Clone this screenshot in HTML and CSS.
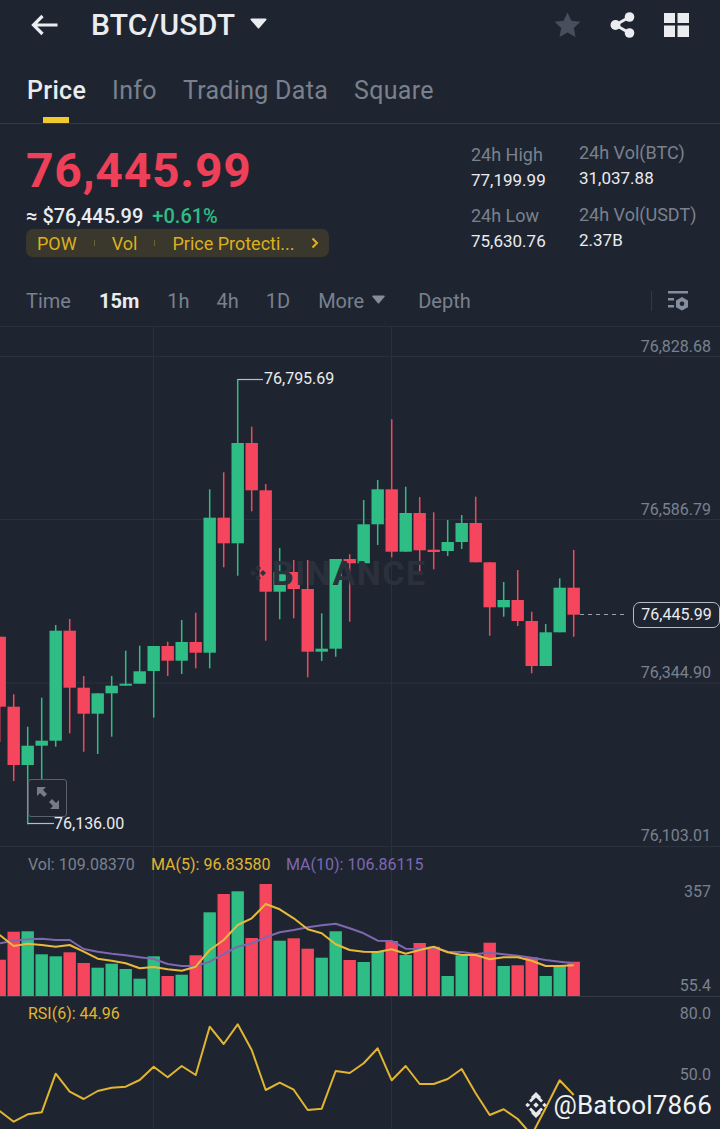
FILE: index.html
```html
<!DOCTYPE html>
<html lang="en">

<head>
  <meta charset="UTF-8">
  <meta name="viewport" content="width=device-width, initial-scale=1.0">
  <title>BTC/USDT</title>
  <link rel="stylesheet" href="styles.css">
</head>

<body>
  <div class="page">
    <!-- Top bar -->
    <header class="topbar">
      <svg class="back-icon" width="28" height="22" viewBox="0 0 28 22">
        <path d="M26.5 11H3M11.5 2L2.5 11l9 9" fill="none" stroke="#eaecef" stroke-width="3.2" />
      </svg>
      <h1 class="pair">BTC/USDT</h1>
      <svg class="pair-caret" width="17" height="11" viewBox="0 0 17 11">
        <path d="M1.5 0.5h14a1 1 0 0 1 .8 1.6L9.3 10a1 1 0 0 1-1.6 0L.7 2.100a1 1 0 0 1 .8-1.600z" fill="#eaecef" />
      </svg>
      <div class="topbar-actions">
        <svg width="27" height="26" viewBox="0 0 27 26">
          <path d="M13.500 0.500l3.900 8.200 9 1.100-6.600 6.200 1.700 8.900-8-4.400-8 4.400 1.700-8.900L.6 9.800l9-1.100z" fill="#474f5c" />
        </svg>
        <svg width="25" height="26" viewBox="0 0 25 26">
          <path d="M19.500 5L5.500 13l14 8" fill="none" stroke="#eaecef" stroke-width="3" />
          <circle cx="19.500" cy="5" r="4.800" fill="#eaecef" />
          <circle cx="5.500" cy="13" r="5" fill="#eaecef" />
          <circle cx="19.500" cy="21" r="4.800" fill="#eaecef" />
        </svg>
        <svg width="25" height="24" viewBox="0 0 25 24">
          <path d="M0 0h11v10H0zM13.500 0H25v10H13.500zM0 12.500h11V24H0zM13.500 12.500H25V24H13.500z" fill="#eaecef" />
        </svg>
      </div>
    </header>

    <!-- Tabs -->
    <nav class="tabs">
      <a href="#" class="tab tab-active">Price</a>
      <a href="#" class="tab">Info</a>
      <a href="#" class="tab">Trading Data</a>
      <a href="#" class="tab">Square</a>
    </nav>

    <!-- Price summary -->
    <section class="summary">
      <div class="summary-main">
        <div class="last-price">76,445.99</div>
        <div class="fiat-row">
          <span class="fiat">≈ $76,445.99</span>
          <span class="change">+0.61%</span>
        </div>
        <div class="tags">
          <span>POW</span>
          <i class="tag-sep"></i>
          <span>Vol</span>
          <i class="tag-sep"></i>
          <span>Price Protecti...</span>
          <svg class="tag-arrow" width="8" height="12" viewBox="0 0 8 12">
            <path d="M1.500 1.500L6 6l-4.500 4.500" fill="none" stroke="#e0b31f" stroke-width="2" />
          </svg>
        </div>
      </div>
      <div class="stat-col stat-col-a">
        <div class="stat">
          <span class="stat-label">24h High</span>
          <span class="stat-value">77,199.99</span>
        </div>
        <div class="stat">
          <span class="stat-label">24h Low</span>
          <span class="stat-value">75,630.76</span>
        </div>
      </div>
      <div class="stat-col stat-col-b">
        <div class="stat">
          <span class="stat-label">24h Vol(BTC)</span>
          <span class="stat-value">31,037.88</span>
        </div>
        <div class="stat">
          <span class="stat-label">24h Vol(USDT)</span>
          <span class="stat-value">2.37B</span>
        </div>
      </div>
    </section>

    <!-- Interval row -->
    <div class="intervals">
      <span class="iv iv-time">Time</span>
      <span class="iv iv-15m">15m</span>
      <span class="iv iv-1h">1h</span>
      <span class="iv iv-4h">4h</span>
      <span class="iv iv-1d">1D</span>
      <span class="iv iv-more">More</span>
      <svg class="more-caret" width="13" height="9" viewBox="0 0 13 9">
        <path d="M1 0.500h11a.8.8 0 0 1 .6 1.300L7.100 8.200a.8.8 0 0 1-1.200 0L.4 1.800A.8.8 0 0 1 1 .5z" fill="#848e9c" />
      </svg>
      <span class="iv iv-depth">Depth</span>
      <i class="iv-sep"></i>
      <svg class="iv-settings" width="22" height="22" viewBox="0 0 22 22">
        <path d="M1 1h20v2.500H1zM1 8h6v2.500H1zM1 15h6v2.500H1z" fill="#848e9c" />
        <path d="M15 7l6 3.400v6.800L15 20.600l-6-3.400v-6.800z" fill="#848e9c" />
        <circle cx="15" cy="13.800" r="2.300" fill="#1f2530" />
      </svg>
    </div>

    <!-- Chart, drawn by chart.js -->
    <main class="chart" id="chart">
      <div class="watermark">
        <svg width="16" height="16" viewBox="0 0 16 16">
          <path d="M8 0l3 3-3 3-3-3zM3 5l3 3-3 3-3-3zM13 5l3 3-3 3-3-3zM8 10l3 3-3 3-3-3z" fill="#2b313c" />
        </svg>
        <span>BINANCE</span>
      </div>
      <div class="expand-btn">
        <svg width="24" height="24" viewBox="0 0 24 24">
          <path d="M1 1h9L7 4l4 4-3 3-4-4-3 3zM23 23h-9l3-3-4-4 3-3 4 4 3-3z" fill="#757c89" />
        </svg>
      </div>
      <div class="price-tag">76,445.99</div>
      <div class="credit">
        <svg width="28" height="28" viewBox="0 0 28 28">
          <path d="M14 1l5 5-2.200 2.200L14 5.400l-2.800 2.800L9 6zM5.500 11.800L8.200 14l-2.700 2.200L3.300 14zM22.500 11.800l2.200 2.200-2.200 2.200L20.300 14zM14 11.200l2.800 2.800-2.800 2.800-2.800-2.800zM9 22l2.200-2.200 2.800 2.800 2.800-2.800L19 22l-5 5z" fill="#e6e8eb" />
          <path d="M7 9.500l7-7 7 7-2 2-5-5-5 5zM7 18.500l2-2 5 5 5-5 2 2-7 7z" fill="#e6e8eb" />
        </svg>
        <span>@Batool7866</span>
      </div>
    </main>
  </div>

  <script src="chart.js"></script>
</body>

</html>
```

FILE: styles.css
```css
/* Basic Reset */
* {
  margin: 0;
  padding: 0;
  box-sizing: border-box;
}

body {
  font-family: 'Roboto', 'Liberation Sans', sans-serif;
  background-color: #1f2530;
  color: #eaecef;
}

.page {
  width: 720px;
  height: 1129px;
  overflow: hidden;
  display: flex;
  flex-direction: column;
}

/* Top bar */
.topbar {
  height: 50px;
  display: flex;
  align-items: center;
  padding-left: 31px;
  flex-shrink: 0;
}

.back-icon {
  margin-right: 32px;
}

.pair {
  font-size: 30px;
  font-weight: 500;
  letter-spacing: 0.2px;
  line-height: 50px;
}

.pair-caret {
  margin: -3px 0 0 15px;
}

.topbar-actions {
  margin-left: auto;
  padding-right: 31px;
  display: flex;
  align-items: center;
  gap: 29px;
}

/* Tabs */
.tabs {
  height: 74px;
  flex-shrink: 0;
  display: flex;
  gap: 26px;
  padding: 26px 0 0 27px;
  border-bottom: 1px solid #343a45;
}

.tab {
  position: relative;
  font-size: 25px;
  line-height: 30px;
  color: #79818f;
  text-decoration: none;
  letter-spacing: 0.3px;
}

.tab-active {
  color: #eaecef;
  font-weight: 500;
}

.tab-active::after {
  content: '';
  position: absolute;
  left: 16px;
  top: 41px;
  width: 26px;
  height: 6px;
  background-color: #f0c92f;
}

/* Summary */
.summary {
  height: 152px;
  flex-shrink: 0;
  display: flex;
  position: relative;
}

.summary-main {
  width: 471px;
  padding: 21px 0 0 26px;
}

.last-price {
  font-size: 48px;
  line-height: 52px;
  font-weight: 700;
  color: #ee4059;
  letter-spacing: 0.8px;
}

.fiat-row {
  display: flex;
  gap: 9px;
  margin-top: 7px;
  font-size: 20px;
  line-height: 24px;
}

.fiat {
  font-weight: 500;
}

.change {
  color: #2ebd85;
  font-weight: 500;
}

.tags {
  width: 303px;
  height: 28px;
  margin-top: 1px;
  border-radius: 7px;
  background-color: #3a372c;
  color: #dcb01e;
  font-size: 18px;
  display: flex;
  align-items: center;
  padding-left: 11px;
}

.tag-sep {
  width: 1px;
  height: 6px;
  margin: 0 17px;
  background-color: #6d6330;
}

.tag-arrow {
  margin-left: 16px;
}

.stat-col {
  display: flex;
  flex-direction: column;
}

.stat-col-a {
  width: 108px;
  padding-top: 20px;
  gap: 14px;
}

.stat-col-b {
  padding-top: 18px;
  gap: 15px;
}

.stat {
  display: flex;
  flex-direction: column;
  gap: 4px;
}

.stat-label {
  font-size: 18px;
  line-height: 22px;
  color: #79818f;
}

.stat-value {
  font-size: 17px;
  line-height: 21px;
  color: #eaecef;
}

/* Intervals */
.intervals {
  height: 51px;
  flex-shrink: 0;
  display: flex;
  align-items: center;
  padding-left: 26px;
  border-bottom: 1px solid #2a303b;
  font-size: 20px;
  color: #79818f;
}

.iv {
  line-height: 24px;
}

.iv-15m {
  margin-left: 28px;
  color: #eaecef;
  font-weight: 700;
}

.iv-1h {
  margin-left: 28px;
}

.iv-4h {
  margin-left: 27px;
}

.iv-1d {
  margin-left: 27px;
}

.iv-more {
  margin-left: 28px;
}

.more-caret {
  margin: -3px 0 0 8px;
}

.iv-depth {
  margin-left: 33px;
}

.iv-sep {
  width: 1px;
  height: 20px;
  margin-left: auto;
  background-color: #343a45;
}

.iv-settings {
  margin: 0 31px 0 15px;
}

/* Chart */
.chart {
  position: relative;
  flex: 1;
}

.chart-svg {
  display: block;
}

.chart-svg text {
  font-family: 'Roboto', 'Liberation Sans', sans-serif;
  font-size: 16px;
}

.axis-label {
  fill: #79818f;
}

.peak-label {
  fill: #eaecef;
}

.legend-vol {
  fill: #79818f;
}

.legend-ma5 {
  fill: #e0b531;
}

.legend-ma10 {
  fill: #7d68b0;
}

.watermark {
  position: absolute;
  left: 250px;
  top: 226px;
  display: flex;
  align-items: center;
  gap: 6px;
  color: #2b313c;
  font-size: 34px;
  font-weight: 700;
  letter-spacing: 1.5px;
  line-height: 40px;
}

.expand-btn {
  position: absolute;
  left: 28px;
  top: 452px;
  width: 39px;
  height: 38px;
  border: 1px solid #5a616d;
  border-radius: 3px;
  background-color: rgba(31, 37, 48, 0.6);
  display: flex;
  align-items: center;
  justify-content: center;
}

.price-tag {
  position: absolute;
  left: 633px;
  top: 275px;
  width: 87px;
  height: 26px;
  border: 1px solid #b7bdc6;
  border-radius: 7px;
  background-color: #1f2530;
  color: #eaecef;
  font-size: 16px;
  line-height: 24px;
  text-align: center;
}

.credit {
  position: absolute;
  right: 8px;
  top: 761px;
  display: flex;
  align-items: center;
  gap: 3px;
  font-size: 26px;
  line-height: 34px;
  color: #f0f1f3;
  letter-spacing: 0.2px;
}
```

FILE: chart.js
```js
// Colours
const GREEN = '#2ebd85';
const RED = '#f6465d';
const GRID = '#2b313c';

// x of the first candle and the distance between candles
const X0 = -0.3;
const STEP = 14;
const BODY = 12.4;

// [colour, wick top, body top, body bottom, wick bottom] in page pixels
const candles = [
  ['r', 636.7, 636.7, 706.7, 742],
  ['r', 694.3, 706.7, 765, 781],
  ['g', 726.7, 745.7, 765, 824.3],
  ['g', 697.7, 740.7, 745.7, 779],
  ['g', 625, 630.7, 740.7, 746.7],
  ['r', 619, 630.7, 687.7, 733.3],
  ['r', 676, 687.7, 713.7, 751.7],
  ['g', 693.3, 693.3, 713.7, 754],
  ['g', 676, 685.7, 693.3, 736.7],
  ['g', 650.7, 683.7, 685.7, 685.7],
  ['g', 645.7, 671.3, 683.7, 683.7],
  ['g', 646, 646, 671, 717.7],
  ['r', 641.7, 646, 660.7, 676],
  ['g', 620, 642, 660.7, 674],
  ['r', 612.7, 642, 652.7, 668.3],
  ['g', 489.3, 517.7, 652.7, 668.3],
  ['r', 472.3, 517.7, 543.3, 567.3],
  ['g', 379, 443, 543.3, 575.7],
  ['r', 426.7, 443, 490.3, 511.3],
  ['r', 484, 490.3, 591.7, 640.7],
  ['g', 548, 572, 591.7, 619.3],
  ['r', 560, 572, 589, 618.3],
  ['r', 560, 589, 651.7, 677.3],
  ['g', 613.3, 648.7, 651.7, 661],
  ['g', 559, 559, 648.7, 656.7],
  ['r', 554.3, 559, 563.3, 621.7],
  ['g', 500, 524.3, 563.3, 563.3],
  ['g', 480, 489.3, 524.3, 545],
  ['r', 419.3, 489.3, 551.7, 557.3],
  ['g', 486.7, 513, 551.7, 551.7],
  ['r', 497, 513, 550.3, 574.3],
  ['r', 512.3, 549.7, 552, 569.3],
  ['g', 520, 542, 551, 556],
  ['g', 515, 523, 542, 549],
  ['r', 496.7, 523, 562.3, 562.3],
  ['r', 562.3, 562.3, 607.3, 635.7],
  ['g', 582, 600, 607.3, 616.7],
  ['r', 570, 600, 621, 626],
  ['r', 611.7, 621, 666, 673.3],
  ['g', 624, 632.3, 666, 666],
  ['g', 578.3, 587.7, 632.3, 632.3],
  ['r', 550, 587.7, 614.7, 636.7]
];

// Tops of the volume bars, bottom is at y = 996
const volumes = [
  959.7, 931.7, 931.3, 954.3, 956.3, 952.3, 963, 967.7, 963.7, 969, 978.7, 956.3, 976, 974.7,
  955.3, 912.3, 894, 891.3, 938, 884, 940.7, 938.3, 948.7, 957.7, 931.3, 960, 962, 951.7,
  941, 955, 943, 946.7, 976, 955.3, 955.3, 942.7, 966, 965.3, 957.3, 976, 966, 961.7
];

const ma5 = [
  935, 946, 943.7, 945, 946.7, 945, 951.7, 958.7, 960.7, 963.3, 968.3, 967, 969.3, 970.7,
  966.7, 950, 940, 925, 918.3, 904, 909.3, 918.3, 929.3, 933.3, 944.3, 950, 951.7, 952,
  949.3, 953.7, 950, 946.7, 952.3, 955, 955, 959.3, 957.3, 957.3, 960.7, 966, 966, 965.3
];

const ma10 = [
  943.3, 940.7, 939.3, 938.7, 940, 940, 949, 951.7, 953.7, 955.3, 957.3, 959, 964, 966,
  966, 961.7, 954, 946.7, 943.3, 937.3, 932.3, 930, 927.3, 925.3, 923.7, 928.3, 933.3, 940.7,
  941, 948.7, 949, 947.7, 951.7, 952, 954, 952.7, 954.3, 955.7, 957.7, 960, 961.7, 963.3
];

const rsi = [
  1111, 1121.7, 1114.3, 1112.3, 1073.7, 1091.7, 1099, 1091, 1087.7, 1086.7, 1080, 1066.7, 1077.3, 1066,
  1075, 1026.7, 1044, 1024.3, 1050, 1090, 1082.7, 1089.7, 1110, 1108.7, 1071, 1073, 1063.3, 1048.3,
  1080.3, 1066, 1084, 1084, 1079, 1069, 1093.3, 1115, 1109.3, 1119, 1135, 1108, 1080.3, 1095
];

const xOf = i => X0 + i * STEP;

function line(x1, y1, x2, y2, color, width, extra = '') {
  return `<line x1="${x1}" y1="${y1}" x2="${x2}" y2="${y2}" stroke="${color}" stroke-width="${width}" ${extra}/>`;
}

function polyline(values, color, width) {
  const points = values.map((y, i) => `${xOf(i)},${y}`).join(' ');
  return `<polyline points="${points}" fill="none" stroke="${color}" stroke-width="${width}" stroke-linejoin="round"/>`;
}

function label(x, y, text, cls, anchor = 'start') {
  return `<text x="${x}" y="${y}" class="${cls}" text-anchor="${anchor}">${text}</text>`;
}

let svg = '';

// Grid
[356.5, 519.5, 683, 846.5].forEach(y => { svg += line(0, y, 720, y, GRID, 1); });
[153.5, 391.5].forEach(x => { svg += line(x, 327, x, 1129, GRID, 1); });

// Candles
candles.forEach((c, i) => {
  const color = c[0] === 'g' ? GREEN : RED;
  const x = xOf(i);
  svg += line(x, c[1], x, c[4], color, 1.5);
  svg += `<rect x="${x - BODY / 2}" y="${c[2]}" width="${BODY}" height="${c[3] - c[2]}" fill="${color}"/>`;
});

// High and low markers
svg += `<polyline points="237.7,379.500 263,379.500" fill="none" stroke="#b7bdc6" stroke-width="1.200"/>`;
svg += `<polyline points="27.700,823.500 54,823.500" fill="none" stroke="#b7bdc6" stroke-width="1.200"/>`;
svg += label(264, 384, '76,795.69', 'peak-label');
svg += label(54, 829, '76,136.00', 'peak-label');

// Last price dotted line
svg += line(580, 614.5, 627, 614.5, '#9aa1ad', 1, 'stroke-dasharray="4 4"');

// Volume pane
volumes.forEach((top, i) => {
  const color = candles[i][0] === 'g' ? GREEN : RED;
  svg += `<rect x="${xOf(i) - BODY / 2}" y="${top}" width="${BODY}" height="${996 - top}" fill="${color}"/>`;
});
svg += line(0, 996.5, 720, 996.5, '#343a45', 1);
svg += polyline(ma10, '#7d68b0', 2);
svg += polyline(ma5, '#e8b93a', 2);

// RSI pane
svg += polyline(rsi, '#e0b531', 2);

// Axis labels
[[351.5, '76,828.68'], [514.5, '76,586.79'], [677.5, '76,344.90'], [840.5, '76,103.01'],
 [897, '357'], [991, '55.4'], [1019, '80.0'], [1080, '50.0']].forEach(([y, text]) => {
  svg += label(711, y, text, 'axis-label', 'end');
});

// Legends
svg += label(28, 870, 'Vol: 109.08370', 'legend-vol');
svg += label(151, 870, 'MA(5): 96.83580', 'legend-ma5');
svg += label(286, 870, 'MA(10): 106.86115', 'legend-ma10');
svg += label(28, 1019, 'RSI(6): 44.96', 'legend-ma5');

const chart = document.getElementById('chart');
chart.insertAdjacentHTML('afterbegin',
  `<svg class="chart-svg" width="720" height="802" viewBox="0 327 720 802">${svg}</svg>`);
```
